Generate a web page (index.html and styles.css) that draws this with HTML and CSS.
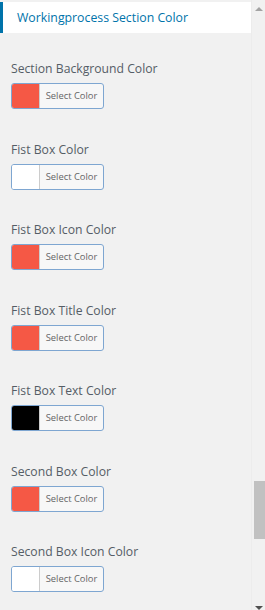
FILE: index.html
```html
<!DOCTYPE html>
<html lang="en">
<head>
    <meta charset="UTF-8">
    <meta name="viewport" content="width=device-width, initial-scale=1.0">
    <title>Workingprocess Section Color</title>
    <link rel="stylesheet" href="styles.css">
</head>
<body>
    <div class="panel">
        <div class="content">
            <div class="section-title">Workingprocess Section Color</div>
            <div class="controls">
                <div class="control">
                    <label class="control-label">Section Background Color</label>
                    <button class="color-picker"><span class="swatch red"></span><span class="picker-text">Select Color</span></button>
                </div>
                <div class="control">
                    <label class="control-label">Fist Box Color</label>
                    <button class="color-picker"><span class="swatch white"></span><span class="picker-text">Select Color</span></button>
                </div>
                <div class="control">
                    <label class="control-label">Fist Box Icon Color</label>
                    <button class="color-picker"><span class="swatch red"></span><span class="picker-text">Select Color</span></button>
                </div>
                <div class="control">
                    <label class="control-label">Fist Box Title Color</label>
                    <button class="color-picker"><span class="swatch red"></span><span class="picker-text">Select Color</span></button>
                </div>
                <div class="control">
                    <label class="control-label">Fist Box Text Color</label>
                    <button class="color-picker"><span class="swatch black"></span><span class="picker-text">Select Color</span></button>
                </div>
                <div class="control">
                    <label class="control-label">Second Box Color</label>
                    <button class="color-picker"><span class="swatch red"></span><span class="picker-text">Select Color</span></button>
                </div>
                <div class="control">
                    <label class="control-label">Second Box Icon Color</label>
                    <button class="color-picker"><span class="swatch white"></span><span class="picker-text">Select Color</span></button>
                </div>
            </div>
        </div>
        <div class="scrollbar">
            <span class="arrow up"></span>
            <span class="track-top"></span>
            <span class="thumb"></span>
            <span class="track-bottom"></span>
            <span class="arrow down"></span>
        </div>
    </div>
</body>
</html>
```

FILE: styles.css
```css
body {
    margin: 0;
    background-color: #f1f1f1;
    font-family: "Open Sans", "Noto Sans", sans-serif;
    height: 610px;
    overflow: hidden;
}

.panel {
    display: flex;
    height: 610px;
}

.content {
    width: 252px;
    padding-top: 2px;
}

.section-title {
    height: 31px;
    background: #ffffff;
    border-left: 3px solid #0073aa;
    padding-left: 14px;
    font-size: 12.3px;
    line-height: 31px;
    color: #0073aa;
    box-sizing: border-box;
}

.controls {
    padding: 28px 0 0 11px;
}

.control {
    margin-bottom: 32.5px;
}

.control-label {
    display: block;
    font-size: 12.2px;
    line-height: 16px;
    color: #555d66;
    margin-bottom: 6px;
}

.color-picker {
    display: flex;
    align-items: stretch;
    width: 93px;
    height: 26px;
    padding: 0;
    border: 1px solid #7ea6d1;
    border-radius: 3px;
    background: #f7f7f7;
    overflow: hidden;
    font-family: inherit;
    cursor: pointer;
}

.swatch {
    width: 27px;
    border-right: 1px solid #cccccc;
}

.swatch.red {
    background: #f55845;
}

.swatch.white {
    background: #ffffff;
}

.swatch.black {
    background: #000000;
}

.picker-text {
    flex: 1;
    font-size: 9.4px;
    line-height: 24px;
    color: #666666;
    text-align: center;
}

.scrollbar {
    width: 13px;
    display: flex;
    flex-direction: column;
    align-items: flex-end;
    background: #f1f1f1;
    border-left: 1px solid #ececec;
}

.arrow {
    width: 0;
    height: 0;
    margin: 0 2px;
    border-left: 4px solid transparent;
    border-right: 4px solid transparent;
}

.arrow.up {
    margin-top: 7px;
    border-bottom: 4px solid #a3a3a3;
}

.arrow.down {
    border-top: 4px solid #505050;
}

.track-top {
    height: 470px;
}

.thumb {
    width: 11px;
    height: 58px;
    background: #c1c1c1;
}

.track-bottom {
    flex: 1;
}
```
